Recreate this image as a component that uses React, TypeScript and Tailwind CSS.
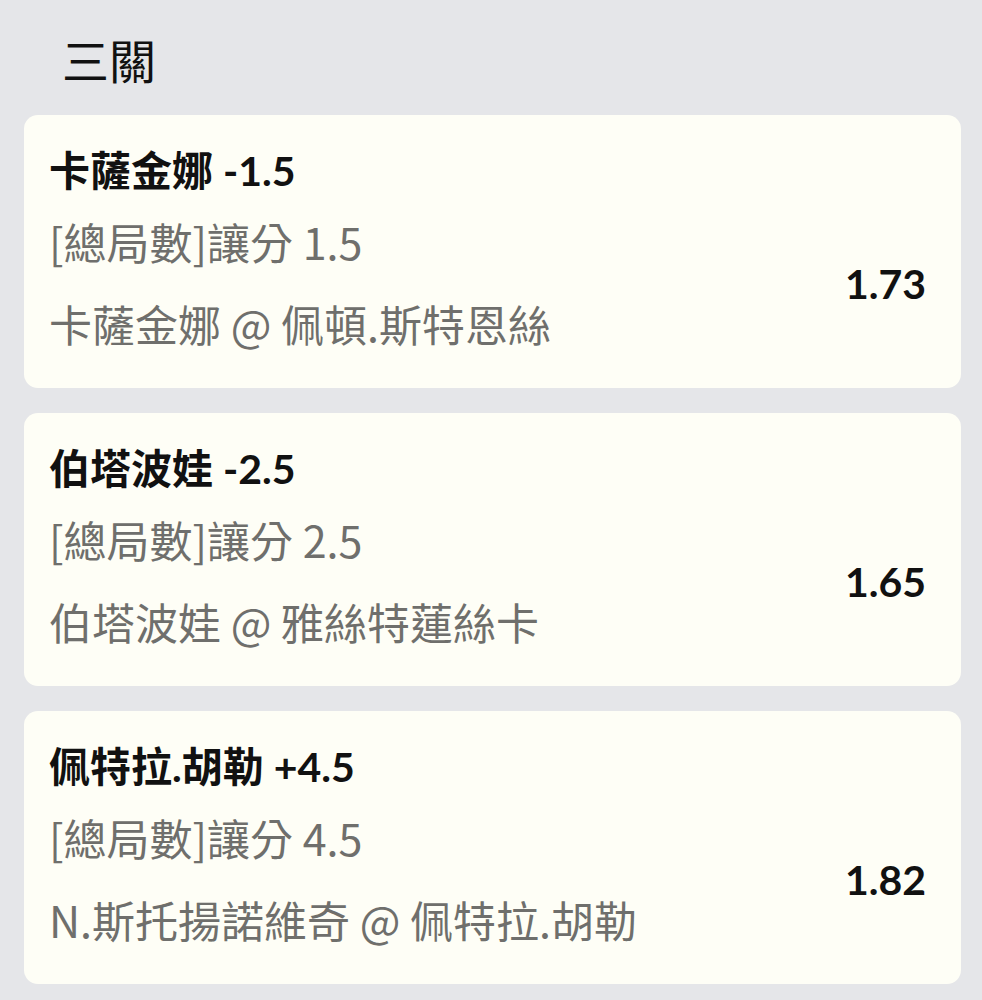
import React from "react";

const items = [
  { title: "卡薩金娜", hc: "-1.5", sub: "[總局數]讓分 1.5", match: "卡薩金娜 @ 佩頓.斯特恩絲", odds: "1.73" },
  { title: "伯塔波娃", hc: "-2.5", sub: "[總局數]讓分 2.5", match: "伯塔波娃 @ 雅絲特蓮絲卡", odds: "1.65" },
  { title: "佩特拉.胡勒", hc: "+4.5", sub: "[總局數]讓分 4.5", match: "N.斯托揚諾維奇 @ 佩特拉.胡勒", odds: "1.82" },
];

const lato = { fontFamily: "Lato, 'Noto Sans CJK TC', sans-serif" };
const noto = { fontFamily: "'Noto Sans CJK TC', 'Noto Sans', sans-serif" };

export default function App() {
  return (
    <div className="min-h-screen bg-[#e5e6e9] pl-[24px] pr-[21px] pb-[20px]" style={lato}>
      <div className="pt-[31px] pl-[38px] text-[47px] leading-[56px] text-[#111111] mb-[28px]" style={noto}>
        三關
      </div>
      <div className="flex flex-col gap-[25px]">
        {items.map((it) => (
          <div key={it.odds} className="h-[273px] rounded-[14px] bg-[#fefef6] pl-[25px] pr-[35px] pt-[32px]">
            <div className="text-[41px] leading-[48px] font-bold text-[#111111] whitespace-nowrap">
              {it.title} {it.hc}
            </div>
            <div className="flex items-center justify-between mt-[22px]">
              <div className="flex flex-col text-[43px] leading-[48px] text-[#6f6f6c] whitespace-nowrap" style={noto}>
                <div>{it.sub}</div>
                <div className="mt-[34px]">{it.match}</div>
              </div>
              <div className="pt-[4px] text-[41px] leading-[48px] font-bold text-[#111111]">{it.odds}</div>
            </div>
          </div>
        ))}
      </div>
    </div>
  );
}
